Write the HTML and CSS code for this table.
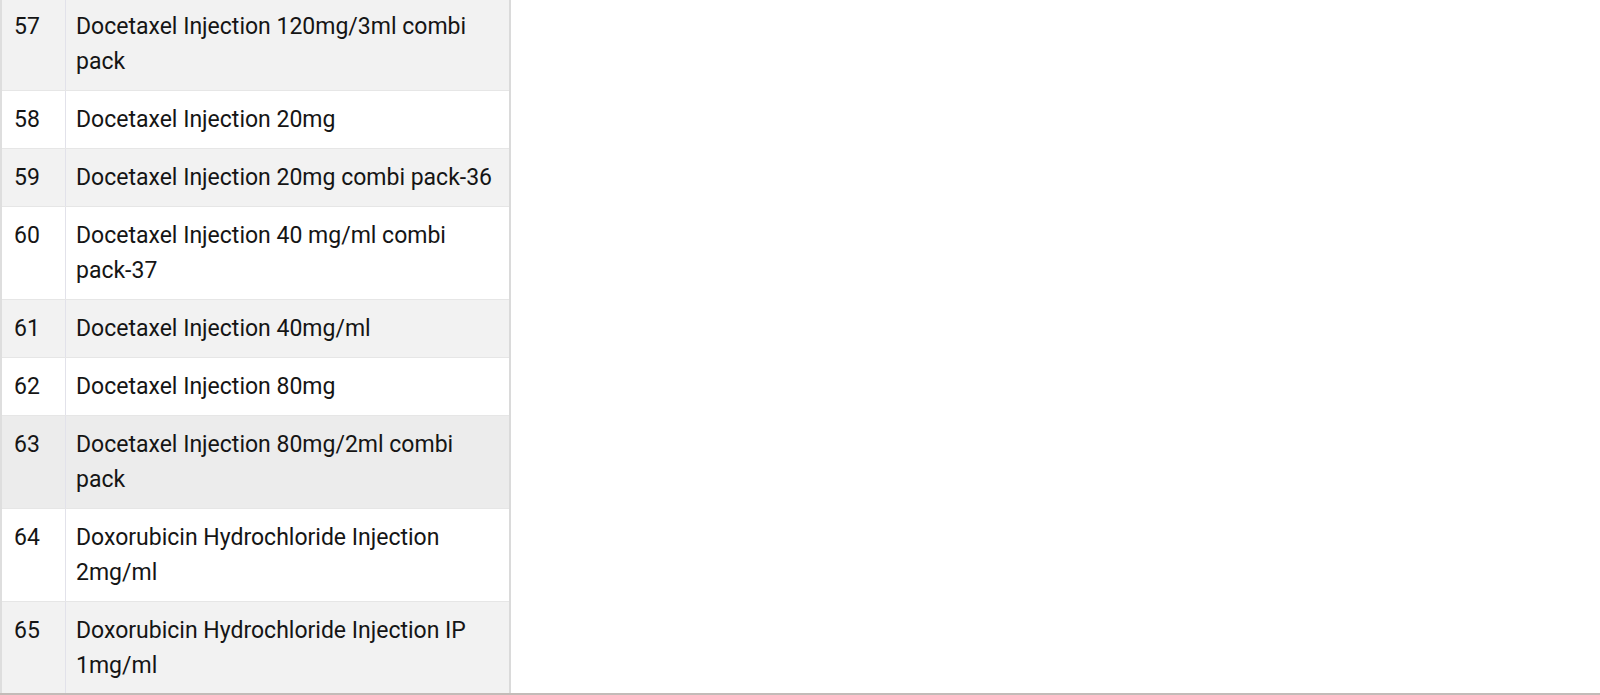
FILE: index.html
```html
<!DOCTYPE html>
<html lang="en">
<head>
<meta charset="utf-8">
<title>Product list</title>
<link rel="stylesheet" href="styles.css">
</head>
<body>
<div class="page">
  <table class="products">
    <tbody>
      <tr class="odd"><td class="num">57</td><td class="name">Docetaxel Injection 120mg/3ml combi pack</td></tr>
      <tr><td class="num">58</td><td class="name">Docetaxel Injection 20mg</td></tr>
      <tr class="odd"><td class="num">59</td><td class="name">Docetaxel Injection 20mg combi pack-36</td></tr>
      <tr><td class="num">60</td><td class="name">Docetaxel Injection 40 mg/ml combi pack-37</td></tr>
      <tr class="odd"><td class="num">61</td><td class="name">Docetaxel Injection 40mg/ml</td></tr>
      <tr><td class="num">62</td><td class="name">Docetaxel Injection 80mg</td></tr>
      <tr class="odd hover"><td class="num">63</td><td class="name">Docetaxel Injection 80mg/2ml combi pack</td></tr>
      <tr><td class="num">64</td><td class="name">Doxorubicin Hydrochloride Injection 2mg/ml</td></tr>
      <tr class="odd"><td class="num">65</td><td class="name">Doxorubicin Hydrochloride Injection IP 1mg/ml</td></tr>
    </tbody>
  </table>
</div>
<div class="bottom-edge"></div>
</body>
</html>
```

FILE: styles.css
```css
html, body {
  margin: 0;
  padding: 0;
  background: #ffffff;
  overflow: hidden;
  height: 695px;
}

body {
  font-family: Roboto, "Liberation Sans", Arial, sans-serif;
  color: #151515;
}

.page {
  margin-top: -2px;
}

.products {
  border-collapse: collapse;
  width: 511px;
  table-layout: fixed;
  border-left: 2px solid #dedede;
  border-right: 2px solid #dadada;
}

.products td {
  font-size: 23px;
  line-height: 35px;
  padding: 11px 12px 11px 12px;
  vertical-align: top;
  border-bottom: 1px solid #e6e6e6;
}

.products td.num {
  width: 39px;
  padding-left: 12px;
  border-right: 1px solid #e2e2ea;
}

.products td.name {
  padding-left: 10px;
}

.products tr.odd td {
  background: #f2f2f2;
}

.products tr.hover td {
  background: #ececec;
}

.bottom-edge {
  position: fixed;
  left: 0;
  right: 0;
  bottom: 0;
  height: 2px;
  background: #c3bbb8;
}
```
